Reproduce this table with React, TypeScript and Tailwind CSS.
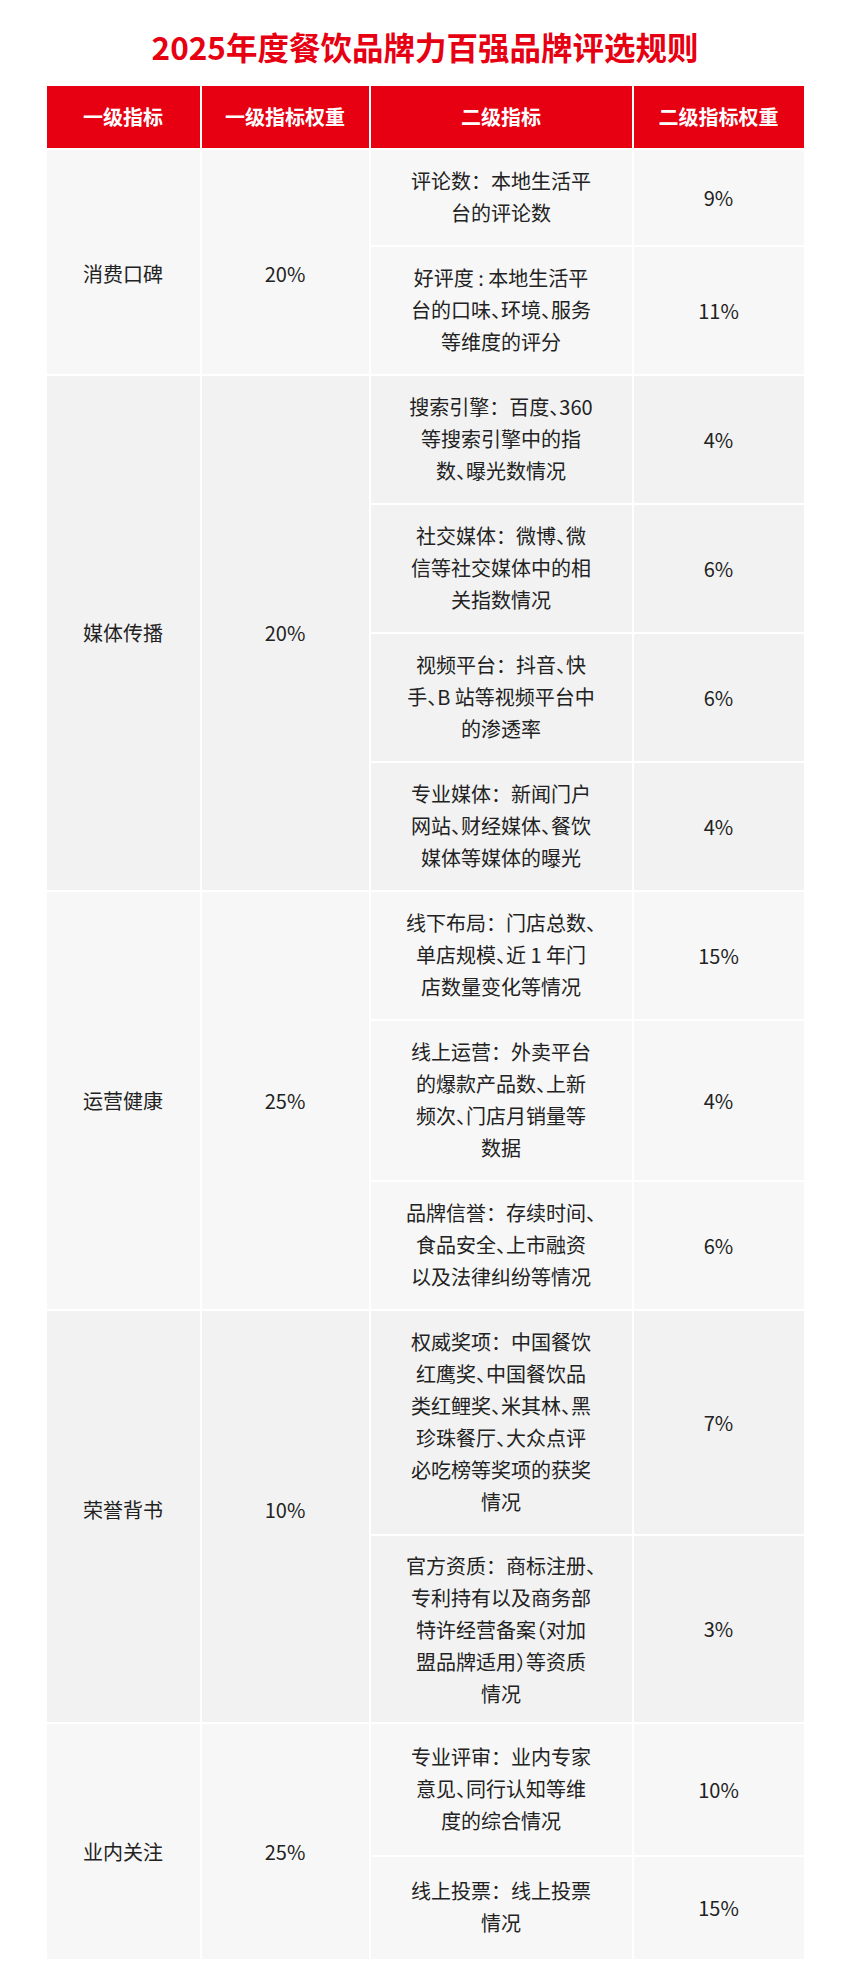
type Sub = { lines: string[]; weight: string; pad?: string };
type Group = { name: string; weight: string; bg: string; labelPad?: string; subs: Sub[] };

const groups: Group[] = [
  {
    name: "消费口碑",
    weight: "20%",
    bg: "bg-[#f7f7f7]",
    labelPad: "pt-[24px]",
    subs: [
      { lines: ["评论数：本地生活平", "台的评论数"], weight: "9%" },
      { lines: ["好评度 : 本地生活平", "台的口味、环境、服务", "等维度的评分"], weight: "11%" },
    ],
  },
  {
    name: "媒体传播",
    weight: "20%",
    bg: "bg-[#f2f2f2]",
    subs: [
      { lines: ["搜索引擎：百度、360", "等搜索引擎中的指", "数、曝光数情况"], weight: "4%" },
      { lines: ["社交媒体：微博、微", "信等社交媒体中的相", "关指数情况"], weight: "6%" },
      { lines: ["视频平台：抖音、快", "手、B 站等视频平台中", "的渗透率"], weight: "6%" },
      { lines: ["专业媒体：新闻门户", "网站、财经媒体、餐饮", "媒体等媒体的曝光"], weight: "4%" },
    ],
  },
  {
    name: "运营健康",
    weight: "25%",
    bg: "bg-[#f7f7f7]",
    subs: [
      { lines: ["线下布局：门店总数、", "单店规模、近 1 年门", "店数量变化等情况"], weight: "15%" },
      { lines: ["线上运营：外卖平台", "的爆款产品数、上新", "频次、门店月销量等", "数据"], weight: "4%" },
      { lines: ["品牌信誉：存续时间、", "食品安全、上市融资", "以及法律纠纷等情况"], weight: "6%" },
    ],
  },
  {
    name: "荣誉背书",
    weight: "10%",
    bg: "bg-[#f2f2f2]",
    labelPad: "pb-[14px]",
    subs: [
      {
        lines: [
          "权威奖项：中国餐饮",
          "红鹰奖、中国餐饮品",
          "类红鲤奖、米其林、黑",
          "珍珠餐厅、大众点评",
          "必吃榜等奖项的获奖",
          "情况",
        ],
        weight: "7%",
      },
      {
        lines: ["官方资质：商标注册、", "专利持有以及商务部", "特许经营备案（对加", "盟品牌适用）等资质", "情况"],
        weight: "3%",
        pad: "pt-[14px] pb-[12px]",
      },
    ],
  },
  {
    name: "业内关注",
    weight: "25%",
    bg: "bg-[#f7f7f7]",
    labelPad: "pt-[20px]",
    subs: [
      { lines: ["专业评审：业内专家", "意见、同行认知等维", "度的综合情况"], weight: "10%", pad: "pt-[17px] pb-[18px]" },
      { lines: ["线上投票：线上投票", "情况"], weight: "15%", pad: "pt-[18px] pb-[20px]" },
    ],
  },
];

// squeeze the enumeration comma and brackets like the original typesetting
function Line({ text }: { text: string }) {
  const parts = text.split(/([、（）])/);
  return (
    <div>
      {parts.map((p, i) =>
        p === "、" || p === "（" || p === "）" ? (
          <span key={i} className="[font-feature-settings:'halt']">
            {p}
          </span>
        ) : (
          <span key={i}>{p}</span>
        )
      )}
    </div>
  );
}

export default function App() {
  return (
    <div className="min-h-screen bg-white font-['Noto_Sans_CJK_SC','Noto_Sans',sans-serif] text-[#222] pb-[24px]">
      <h1 className="pt-[26px] text-center text-[31.5px] leading-[40px] font-bold text-[#e60012]">
        2025年度餐饮品牌力百强品牌评选规则
      </h1>

      <div className="w-[757px] mx-auto mt-[20px] flex flex-col gap-[2px]">
        <div className="flex gap-[2px] h-[62px] text-white text-[20px] font-bold">
          <div className="w-[153px] bg-[#e60012] flex items-center justify-center">一级指标</div>
          <div className="w-[167px] bg-[#e60012] flex items-center justify-center">一级指标权重</div>
          <div className="w-[261px] bg-[#e60012] flex items-center justify-center">二级指标</div>
          <div className="w-[170px] bg-[#e60012] flex items-center justify-center">二级指标权重</div>
        </div>

        {groups.map((g) => (
          <div key={g.name} className="flex gap-[2px] text-[20px]">
            <div className={`w-[153px] ${g.bg} ${g.labelPad ?? ""} flex items-center justify-center`}>{g.name}</div>
            <div className={`w-[167px] ${g.bg} ${g.labelPad ?? ""} flex items-center justify-center`}>{g.weight}</div>
            <div className="flex flex-col gap-[2px]">
              {g.subs.map((s, i) => (
                <div key={i} className="flex gap-[2px]">
                  <div className={`w-[261px] ${g.bg} ${s.pad ?? "pt-[15px] pb-[16px]"} text-center leading-[32px]`}>
                    {s.lines.map((l, j) => (
                      <Line key={j} text={l} />
                    ))}
                  </div>
                  <div className={`w-[170px] ${g.bg} flex items-center justify-center`}>{s.weight}</div>
                </div>
              ))}
            </div>
          </div>
        ))}
      </div>
    </div>
  );
}
